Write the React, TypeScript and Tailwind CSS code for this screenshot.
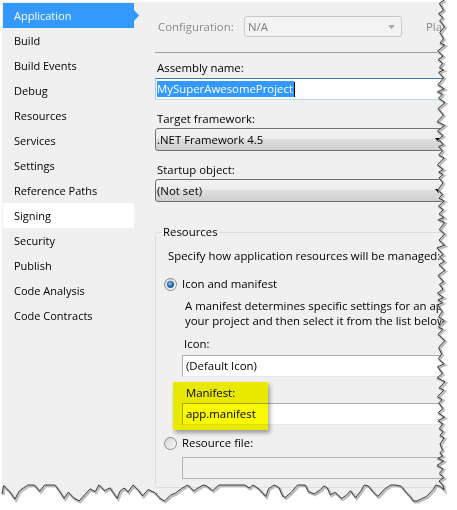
import React from 'react';

// deterministic "random" so the torn paper edge is the same on every render
function rng(seed: number) {
  let s = seed;
  return () => {
    s = (s * 16807) % 2147483647;
    return (s - 1) / 2147483646;
  };
}

function tornEdge() {
  const r = rng(42);
  const pts: [number, number][] = [];
  let y = 0;
  let side = 1;
  while (y < 488) {
    const big = r() < 0.12 ? r() * 4 - 2 : 0;
    pts.push([441 + side * (1 + r() * 3) + big, y]);
    y += 2 + r() * 5;
    side *= -1;
  }
  pts.push([444, 490]);
  let x = 440;
  let cur = 493;
  let dir = -1;
  while (x > 2) {
    // little saw-tooth peaks like the screenshot tool's torn edge
    cur = Math.max(485, Math.min(501, cur + dir * (2 + r() * 6)));
    if (r() < 0.45) dir *= -1;
    pts.push([x, cur]);
    x -= 2 + r() * 5;
  }
  pts.push([2, 494]);
  return pts;
}

const EDGE = tornEdge();
const EDGE_LINE = EDGE.map(([x, y], i) => `${i ? 'L' : 'M'}${x.toFixed(1)} ${y.toFixed(1)}`).join(' ');
const EDGE_FILL = `M457 0 ${EDGE.map(([x, y]) => `L${x.toFixed(1)} ${y.toFixed(1)}`).join(' ')} L0 494 L0 510 L457 510 Z`;

const navItems = [
  'Application',
  'Build',
  'Build Events',
  'Debug',
  'Resources',
  'Services',
  'Settings',
  'Reference Paths',
  'Signing',
  'Security',
  'Publish',
  'Code Analysis',
  'Code Contracts',
];

function Radio({ checked }: { checked?: boolean }) {
  return (
    <svg width="13" height="13" viewBox="0 0 13 13" className="shrink-0">
      <defs>
        <linearGradient id={checked ? 'rg1' : 'rg2'} x1="0" y1="0" x2="1" y2="1">
          <stop offset="0" stopColor="#d4d4d4" />
          <stop offset="1" stopColor="#fbfbfb" />
        </linearGradient>
        <radialGradient id="dot" cx="0.4" cy="0.35" r="0.7">
          <stop offset="0" stopColor="#8fd0f7" />
          <stop offset="0.5" stopColor="#2a86c8" />
          <stop offset="1" stopColor="#0d3f7a" />
        </radialGradient>
      </defs>
      <circle cx="6.5" cy="6.5" r="6" fill={`url(#${checked ? 'rg1' : 'rg2'})`} stroke="#8b8b8b" />
      {checked && <circle cx="6.5" cy="6.5" r="3.2" fill="url(#dot)" stroke="#1d4f86" strokeWidth="0.6" />}
    </svg>
  );
}

function Arrow({ color }: { color: string }) {
  return (
    <svg width="7" height="4" viewBox="0 0 7 4" className="shrink-0">
      <path d="M0 0 L7 0 L3.5 4 Z" fill={color} />
    </svg>
  );
}

export default function App() {
  return (
    <div className="relative w-[457px] h-[510px] overflow-hidden bg-white font-['Open_Sans',sans-serif] text-[11px] leading-[16px] text-black">
      <div className="flex ml-[2px] mt-[2px] w-[470px] h-[506px] bg-[#f0f0f0]">
        <nav className="w-[137px] shrink-0 pt-[1px] pl-[1px]">
          {navItems.map((item) => {
            const active = item === 'Application';
            return (
              <div key={item} className="flex items-center h-[25px]">
                <div
                  className={`w-[131px] h-full flex items-center pl-[11px] ${
                    active ? 'bg-[#3399ff] text-white' : item === 'Signing' ? 'bg-white' : ''
                  }`}
                >
                  {item}
                </div>
                {active && (
                  <svg width="5" height="11" viewBox="0 0 5 11">
                    <path d="M0 0 L5 5.5 L0 11 Z" fill="#3399ff" />
                  </svg>
                )}
              </div>
            );
          })}
        </nav>

        <div className="flex-1 pl-[16px] text-[11.4px]">
          <div className="mt-[14px] flex items-center h-[21px]">
            <span className="w-[89px] pl-[3px] text-[#8a8a8a]">Configuration:</span>
            <div className="w-[158px] h-[21px] flex items-center justify-between pl-[3px] pr-[6px] border border-[#c8c8c8] rounded-[3px] bg-[#f3f3f3] text-[#7c7c7c]">
              N/A
              <Arrow color="#a8a8a8" />
            </div>
            <span className="ml-[24px] text-[#8a8a8a]">Platform:</span>
          </div>

          <div className="mt-[15px] h-px bg-[#a0a0a0]" />

          <div className="mt-[7px] pl-[2px]">Assembly name:</div>
          <div className="mt-[2px] w-[295px] h-[22px] flex items-center pl-[1px] bg-white border border-[#a4c9e3] border-t-[#3d7bad] border-b-[#b7d9ed]">
            <span className="bg-[#3399ff] text-white pr-[1px]">MySuperAwesomeProject</span>
            <span className="w-px h-[15px] bg-black" />
          </div>

          <div className="mt-[11px] pl-[2px]">Target framework:</div>
          <div className="mt-[1px] w-[295px] h-[23px] flex items-center justify-between pl-[1px] pr-[7px] border border-[#707070] rounded-[3px] bg-[linear-gradient(#f2f2f2,#ebebeb_50%,#dddddd_50%,#cfcfcf)]">
            .NET Framework 4.5
            <Arrow color="#000" />
          </div>

          <div className="mt-[11px] pl-[2px]">Startup object:</div>
          <div className="mt-[1px] w-[295px] h-[23px] flex items-center justify-between pl-[1px] pr-[7px] border border-[#707070] rounded-[3px] bg-[linear-gradient(#f2f2f2,#ebebeb_50%,#dddddd_50%,#cfcfcf)]">
            (Not set)
            <Arrow color="#000" />
          </div>

          <fieldset className="mt-[22px] w-[320px] h-[264px] px-[6px] border border-[#d5dfe5] rounded-[3px]">
            <legend className="px-[1px]">Resources</legend>
            <div className="pl-[2px]">
              <div className="mt-[8px] pl-[4px] whitespace-nowrap">
                Specify how application resources will be managed:
              </div>
              <div className="mt-[12px] flex items-center gap-[5px] h-[16px]">
                <Radio checked />
                <span>Icon and manifest</span>
              </div>
              <div className="pl-[18px]">
                <div className="mt-[6px] pl-[3px] leading-[15px] whitespace-nowrap">
                  <div>A manifest determines specific settings for an application. To embed a custom manifest, first add it to</div>
                  <div>your project and then select it from the list below.</div>
                </div>
                <div className="mt-[8px] pl-[2px]">Icon:</div>
                <div className="mt-[3px] h-[22px] flex items-center pl-[3px] bg-white border border-[#abadb3] border-b-[#e3e9ef] border-r-[#dbdfe6]">
                  (Default Icon)
                </div>
                <div className="mt-[8px] pl-[4px]">Manifest:</div>
                <div className="mt-[2px] h-[22px] flex items-center pl-[3px] bg-white border border-[#abadb3] border-b-[#e3e9ef] border-r-[#dbdfe6]">
                  app.manifest
                </div>
              </div>
              <div className="mt-[9px] flex items-center gap-[5px] h-[16px] pt-[2px]">
                <Radio />
                <span>Resource file:</span>
              </div>
              <div className="ml-[18px] mt-[7px] h-[22px] bg-[#f0f0f0] border border-[#adb2b5]" />
            </div>
          </fieldset>
        </div>
      </div>

      {/* yellow marker highlight */}
      <div className="absolute left-[173px] top-[382px] w-[95px] h-[48px] bg-[#f8f800] mix-blend-multiply shadow-[2px_3px_4px_rgba(0,0,0,0.35)]" />

      {/* torn paper edge */}
      <svg className="absolute left-0 top-0 pointer-events-none" width="457" height="510" viewBox="0 0 457 510">
        <path d={EDGE_FILL} fill="#fff" />
        <path d={EDGE_LINE} fill="none" stroke="#bdbdbd" strokeWidth="2.5" transform="translate(1.2 1.2)" />
        <path d={EDGE_LINE} fill="none" stroke="#3a3a3a" strokeWidth="1" />
      </svg>
    </div>
  );
}
